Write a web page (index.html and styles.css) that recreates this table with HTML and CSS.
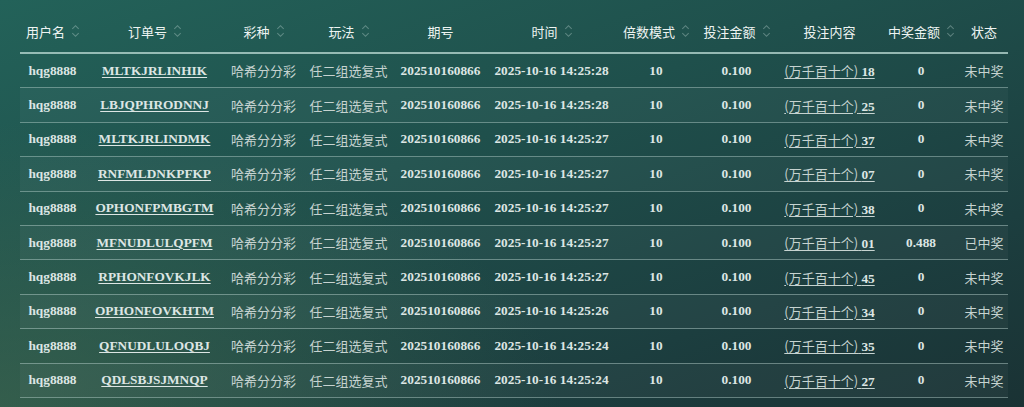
FILE: index.html
```html
<!DOCTYPE html>
<html lang="zh">
<head>
<meta charset="utf-8">
<link rel="stylesheet" href="styles.css">
</head>
<body>
<div class="page">
<table class="grid">
<colgroup>
<col class="c1"><col class="c2"><col class="c3"><col class="c4"><col class="c5"><col class="c6"><col class="c7"><col class="c8"><col class="c9"><col class="c10"><col class="c11">
</colgroup>
<thead>
<tr>
<th><span class="th">用户名<i class="sort"></i></span></th>
<th><span class="th">订单号<i class="sort"></i></span></th>
<th><span class="th">彩种<i class="sort"></i></span></th>
<th><span class="th">玩法<i class="sort"></i></span></th>
<th><span class="th">期号</span></th>
<th><span class="th">时间<i class="sort"></i></span></th>
<th><span class="th">倍数模式<i class="sort"></i></span></th>
<th><span class="th">投注金额<i class="sort"></i></span></th>
<th><span class="th">投注内容</span></th>
<th><span class="th">中奖金额<i class="sort"></i></span></th>
<th><span class="th">状态</span></th>
</tr>
</thead>
<tbody>
<tr><td class="b">hqg8888</td><td><a class="b">MLTKJRLINHIK</a></td><td class="cn">哈希分分彩</td><td class="cn">任二组选复式</td><td class="b">202510160866</td><td class="b">2025-10-16 14:25:28</td><td class="b">10</td><td class="b">0.100</td><td><a class="bet"><span class="cn">(万千百十个)</span> <b>18</b></a></td><td class="b">0</td><td class="cn">未中奖</td></tr>
<tr><td class="b">hqg8888</td><td><a class="b">LBJQPHRODNNJ</a></td><td class="cn">哈希分分彩</td><td class="cn">任二组选复式</td><td class="b">202510160866</td><td class="b">2025-10-16 14:25:28</td><td class="b">10</td><td class="b">0.100</td><td><a class="bet"><span class="cn">(万千百十个)</span> <b>25</b></a></td><td class="b">0</td><td class="cn">未中奖</td></tr>
<tr><td class="b">hqg8888</td><td><a class="b">MLTKJRLINDMK</a></td><td class="cn">哈希分分彩</td><td class="cn">任二组选复式</td><td class="b">202510160866</td><td class="b">2025-10-16 14:25:27</td><td class="b">10</td><td class="b">0.100</td><td><a class="bet"><span class="cn">(万千百十个)</span> <b>37</b></a></td><td class="b">0</td><td class="cn">未中奖</td></tr>
<tr><td class="b">hqg8888</td><td><a class="b">RNFMLDNKPFKP</a></td><td class="cn">哈希分分彩</td><td class="cn">任二组选复式</td><td class="b">202510160866</td><td class="b">2025-10-16 14:25:27</td><td class="b">10</td><td class="b">0.100</td><td><a class="bet"><span class="cn">(万千百十个)</span> <b>07</b></a></td><td class="b">0</td><td class="cn">未中奖</td></tr>
<tr><td class="b">hqg8888</td><td><a class="b">OPHONFPMBGTM</a></td><td class="cn">哈希分分彩</td><td class="cn">任二组选复式</td><td class="b">202510160866</td><td class="b">2025-10-16 14:25:27</td><td class="b">10</td><td class="b">0.100</td><td><a class="bet"><span class="cn">(万千百十个)</span> <b>38</b></a></td><td class="b">0</td><td class="cn">未中奖</td></tr>
<tr><td class="b">hqg8888</td><td><a class="b">MFNUDLULQPFM</a></td><td class="cn">哈希分分彩</td><td class="cn">任二组选复式</td><td class="b">202510160866</td><td class="b">2025-10-16 14:25:27</td><td class="b">10</td><td class="b">0.100</td><td><a class="bet"><span class="cn">(万千百十个)</span> <b>01</b></a></td><td class="b">0.488</td><td class="cn">已中奖</td></tr>
<tr><td class="b">hqg8888</td><td><a class="b">RPHONFOVKJLK</a></td><td class="cn">哈希分分彩</td><td class="cn">任二组选复式</td><td class="b">202510160866</td><td class="b">2025-10-16 14:25:27</td><td class="b">10</td><td class="b">0.100</td><td><a class="bet"><span class="cn">(万千百十个)</span> <b>45</b></a></td><td class="b">0</td><td class="cn">未中奖</td></tr>
<tr><td class="b">hqg8888</td><td><a class="b">OPHONFOVKHTM</a></td><td class="cn">哈希分分彩</td><td class="cn">任二组选复式</td><td class="b">202510160866</td><td class="b">2025-10-16 14:25:26</td><td class="b">10</td><td class="b">0.100</td><td><a class="bet"><span class="cn">(万千百十个)</span> <b>34</b></a></td><td class="b">0</td><td class="cn">未中奖</td></tr>
<tr><td class="b">hqg8888</td><td><a class="b">QFNUDLULOQBJ</a></td><td class="cn">哈希分分彩</td><td class="cn">任二组选复式</td><td class="b">202510160866</td><td class="b">2025-10-16 14:25:24</td><td class="b">10</td><td class="b">0.100</td><td><a class="bet"><span class="cn">(万千百十个)</span> <b>35</b></a></td><td class="b">0</td><td class="cn">未中奖</td></tr>
<tr><td class="b">hqg8888</td><td><a class="b">QDLSBJSJMNQP</a></td><td class="cn">哈希分分彩</td><td class="cn">任二组选复式</td><td class="b">202510160866</td><td class="b">2025-10-16 14:25:24</td><td class="b">10</td><td class="b">0.100</td><td><a class="bet"><span class="cn">(万千百十个)</span> <b>27</b></a></td><td class="b">0</td><td class="cn">未中奖</td></tr>
</tbody>
</table>
</div>
</body>
</html>
```
FILE: styles.css
```css
html, body {
  margin: 0;
  padding: 0;
}
body {
  width: 1024px;
  height: 407px;
  overflow: hidden;
  background:
    radial-gradient(ellipse 55% 70% at 0% 100%, rgba(70, 110, 80, 0.55), rgba(70, 110, 80, 0) 100%),
    linear-gradient(160deg, #236259 0%, #1f504c 40%, #1c3e3f 75%, #1a3234 100%);
  font-family: "Liberation Serif", "Noto Sans CJK SC", serif;
  color: #dce6e4;
}
.page {
  padding: 10px 16px 0 20px;
}
.grid {
  width: 988px;
  table-layout: fixed;
  border-collapse: collapse;
}
.c1 { width: 65px; }
.c2 { width: 139px; }
.c3 { width: 79px; }
.c4 { width: 91px; }
.c5 { width: 93px; }
.c6 { width: 129px; }
.c7 { width: 80px; }
.c8 { width: 81px; }
.c9 { width: 105px; }
.c10 { width: 78px; }
.c11 { width: 48px; }

th {
  height: 42px;
  padding: 0;
  font-weight: normal;
  text-align: center;
  border-bottom: 2px solid rgba(190, 220, 214, 0.75);
  white-space: nowrap;
}
.th {
  display: inline-flex;
  align-items: center;
  gap: 6px;
  font-family: "Noto Sans CJK SC", sans-serif;
  font-size: 13px;
  color: #eef4f2;
  letter-spacing: 0;
}
.sort {
  position: relative;
  display: inline-block;
  width: 8px;
  height: 14px;
}
.sort::before,
.sort::after {
  content: "";
  position: absolute;
  left: 2px;
  width: 4px;
  height: 4px;
  border-left: 1px solid rgba(210, 230, 226, 0.35);
  border-top: 1px solid rgba(210, 230, 226, 0.35);
}
.sort::before {
  top: 2px;
  transform: rotate(45deg);
}
.sort::after {
  bottom: 2px;
  transform: rotate(-135deg);
}

td {
  height: 33.4px;
  padding: 0;
  text-align: center;
  white-space: nowrap;
  border-bottom: 1px solid rgba(190, 215, 210, 0.45);
  font-size: 13.3px;
}
tbody tr:nth-child(even) td {
  background: rgba(255, 255, 255, 0.035);
}
.b {
  font-weight: bold;
  color: #dde6e4;
}
.cn {
  font-family: "Noto Sans CJK SC", sans-serif;
  font-size: 13px;
  font-weight: normal;
  color: #c6d3d0;
}
a {
  text-decoration: underline;
  text-underline-offset: 2px;
  cursor: pointer;
}
.bet {
  color: #c6d3d0;
}
.bet b {
  font-weight: bold;
  color: #dde6e4;
}
```
